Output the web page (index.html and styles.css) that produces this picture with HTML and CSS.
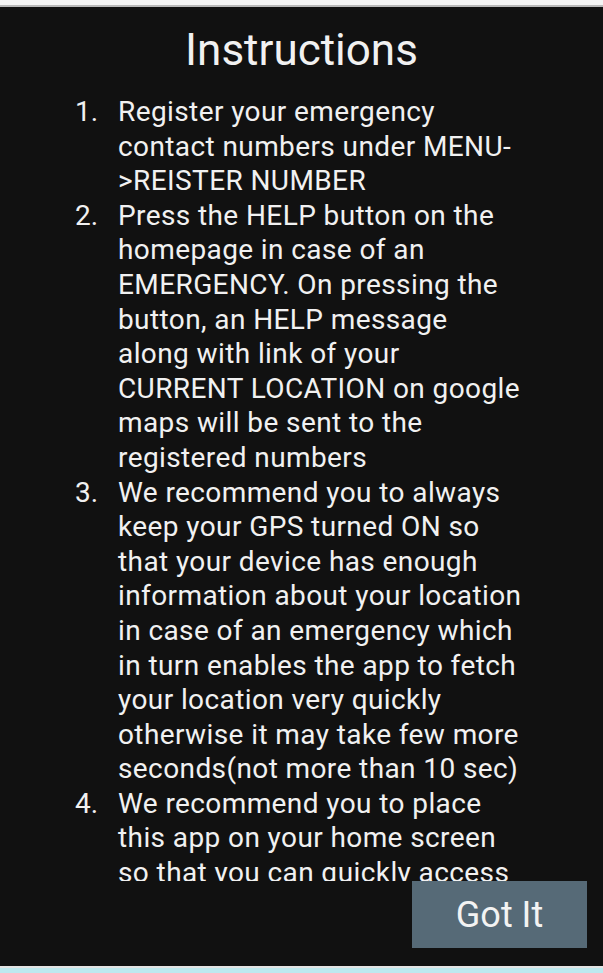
FILE: index.html
```html
<!DOCTYPE html>
<html>
<head>
<meta charset="utf-8">
<link rel="stylesheet" href="styles.css">
</head>
<body>
<div class="topbar"></div>
<main class="dialog">
  <h1 class="title">Instructions</h1>
  <div class="scroll">
    <ol class="steps">
      <li class="step"><span class="num">1.</span><span class="text">Register your emergency<br>contact numbers under MENU-<br>&gt;REISTER NUMBER</span></li>
      <li class="step"><span class="num">2.</span><span class="text">Press the HELP button on the<br>homepage in case of an<br>EMERGENCY. On pressing the<br>button, an HELP message<br>along with link of your<br>CURRENT LOCATION on google<br>maps will be sent to the<br>registered numbers</span></li>
      <li class="step"><span class="num">3.</span><span class="text">We recommend you to always<br>keep your GPS turned ON so<br>that your device has enough<br>information about your location<br>in case of an emergency which<br>in turn enables the app to fetch<br>your location very quickly<br>otherwise it may take few more<br>seconds(not more than 10 sec)</span></li>
      <li class="step"><span class="num">4.</span><span class="text">We recommend you to place<br>this app on your home screen<br>so that you can quickly access<br>it in case of an emergency</span></li>
    </ol>
  </div>
  <div class="actions">
    <button class="got-it">Got It</button>
  </div>
</main>
<div class="bottombar"></div>
</body>
</html>
```
FILE: styles.css
```css
html, body {
  margin: 0;
  padding: 0;
  height: 100%;
}
body {
  background: #ffffff;
  font-family: Roboto, "Liberation Sans", sans-serif;
  display: flex;
  flex-direction: column;
  overflow: hidden;
}
.topbar {
  height: 5px;
  background: #f4f4f4;
  border-bottom: 2px solid #b9b9b9;
  flex: none;
}
.dialog {
  background: #111111;
  color: #f1f1f1;
  height: 959px;
  flex: none;
  display: flex;
  flex-direction: column;
  box-sizing: border-box;
  padding-top: 18px;
}
.title {
  margin: 0;
  font-weight: 400;
  font-size: 44px;
  line-height: 50px;
  text-align: center;
}
.scroll {
  margin-top: 20px;
  height: 786px;
  overflow: hidden;
  flex: none;
}
.steps {
  list-style: none;
  margin: 0;
  padding: 0 0 0 75px;
  font-size: 28px;
  letter-spacing: 0.4px;
  line-height: 34.6px;
}
.step {
  display: flex;
}
.num {
  width: 43px;
  flex: none;
  letter-spacing: 0;
}
.text {
  white-space: nowrap;
}
.actions {
  display: flex;
  justify-content: flex-end;
  padding-right: 16px;
}
.got-it {
  width: 175px;
  height: 67px;
  border: none;
  border-radius: 0;
  background: #566a77;
  color: #f3f3f3;
  font-family: Roboto, "Liberation Sans", sans-serif;
  font-size: 36px;
  padding: 0;
}
.bottombar {
  flex: 1;
  background: #bde9ef;
  border-top: 2px solid #e4e4e4;
}
```
